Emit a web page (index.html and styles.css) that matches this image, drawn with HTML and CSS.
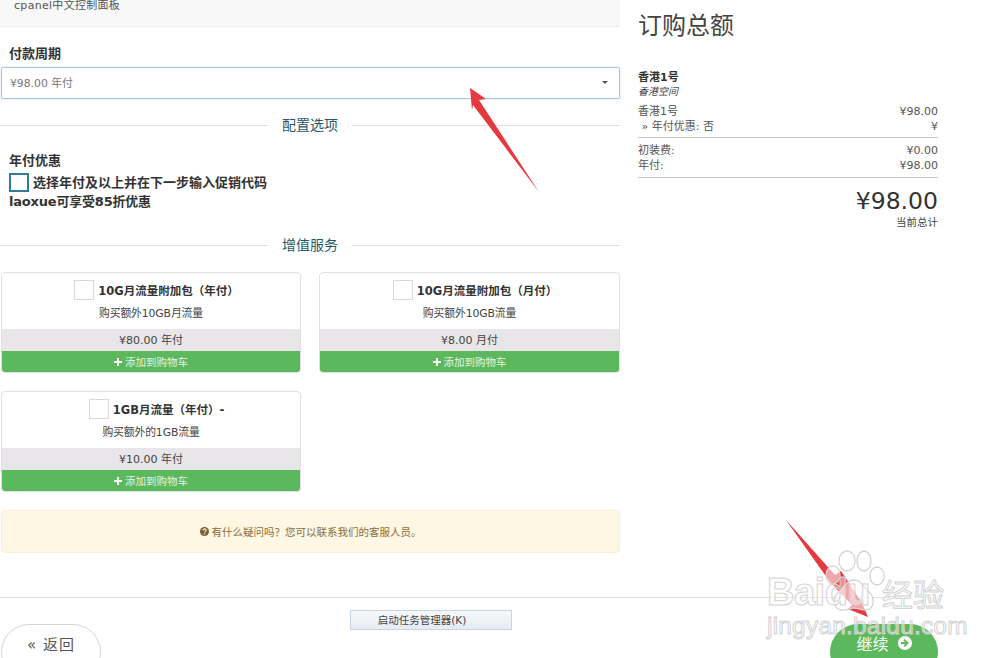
FILE: index.html
```html
<!DOCTYPE html>
<html lang="zh">
<head>
<meta charset="utf-8">
<title>订购</title>
<link rel="stylesheet" href="styles.css">
</head>
<body>
<div class="page">
  <div class="columns">
    <main class="left">
      <div class="product-top">cpanel中文控制面板</div>
      <div class="field-label">付款周期</div>
      <div class="select"><span>¥98.00 年付</span><i class="caret"></i></div>
      <div class="divider first"><span>配置选项</span></div>
      <div class="option">
        <div class="option-title">年付优惠</div>
        <div class="option-line"><i class="check active"></i><span>选择年付及以上并在下一步输入促销代码</span></div>
        <div class="option-last">laoxue可享受85折优惠</div>
      </div>
      <div class="divider second"><span>增值服务</span></div>
      <div class="addons">
        <div class="addon">
          <div class="addon-head"><i class="check"></i><b>10G月流量附加包（年付）</b></div>
          <div class="addon-desc">购买额外10GB月流量</div>
          <div class="addon-price">¥80.00 年付</div>
          <div class="addon-add"><svg class="plus" viewBox="0 0 10 10"><path d="M3.8 0h2.4v3.8H10v2.4H6.2V10H3.8V6.2H0V3.8h3.8z"/></svg>添加到购物车</div>
        </div>
        <div class="addon">
          <div class="addon-head"><i class="check"></i><b>10G月流量附加包（月付）</b></div>
          <div class="addon-desc">购买额外10GB流量</div>
          <div class="addon-price">¥8.00 月付</div>
          <div class="addon-add"><svg class="plus" viewBox="0 0 10 10"><path d="M3.8 0h2.4v3.8H10v2.4H6.2V10H3.8V6.2H0V3.8h3.8z"/></svg>添加到购物车</div>
        </div>
        <div class="addon">
          <div class="addon-head"><i class="check"></i><b>1GB月流量（年付）-</b></div>
          <div class="addon-desc">购买额外的1GB流量</div>
          <div class="addon-price">¥10.00 年付</div>
          <div class="addon-add"><svg class="plus" viewBox="0 0 10 10"><path d="M3.8 0h2.4v3.8H10v2.4H6.2V10H3.8V6.2H0V3.8h3.8z"/></svg>添加到购物车</div>
        </div>
      </div>
      <div class="alert"><svg class="help" viewBox="0 0 10 10"><circle cx="5" cy="5" r="5"/><path d="M3.3 3.9c0-1.1.8-1.8 1.8-1.8s1.7.6 1.7 1.5c0 1.3-1.3 1.3-1.3 2.4" fill="none" stroke="#fdf7e3" stroke-width="1.2"/><rect x="4.4" y="7" width="1.3" height="1.3" fill="#fdf7e3"/></svg>有什么疑问吗？您可以联系我们的客服人员。</div>
    </main>
    <aside class="summary">
      <h2>订购总额</h2>
      <div class="sum-name">香港1号</div>
      <div class="sum-group">香港空间</div>
      <div class="sum-row"><span>香港1号</span><span>¥98.00</span></div>
      <div class="sum-row"><span>&nbsp;» 年付优惠: 否</span><span>¥</span></div>
      <div class="sum-rule tight"></div>
      <div class="sum-row"><span>初装费:</span><span>¥0.00</span></div>
      <div class="sum-row"><span>年付:</span><span>¥98.00</span></div>
      <div class="sum-rule"></div>
      <div class="sum-total">¥98.00</div>
      <div class="sum-note">当前总计</div>
    </aside>
  </div>
  <footer class="footer">
    <div class="footer-rule"></div>
    <div class="footer-row">
      <div class="btn back">« 返回</div>
      <div class="btn next">继续<svg class="go" viewBox="0 0 14 14"><circle cx="7" cy="7" r="7" fill="#fff"/><path d="M3 6h4.200L5.400 4.200l1.300-1.300L10.900 7l-4.200 4.100-1.300-1.300L7.200 8H3z" fill="#5cb85c"/></svg></div>
    </div>
  </footer>
  <div class="task-btn">启动任务管理器(K)</div>
  <svg class="arrows" viewBox="0 0 1000 658">
    <path d="M470 88 L486 99 L479 100 L539 192 L473 105 L472 110 Z" fill="#e5393f"/>
    <path d="M786 520 L835 575 L841 571 L862 603 L868 617 L848 609 L852 605 L830 582 Z" fill="#e5393f"/>
  </svg>
  <div class="watermark">
    <svg class="paw" viewBox="0 0 60 66">
      <g fill="rgba(255,255,255,.55)" stroke="#d4d4d4" stroke-width="1.300">
        <ellipse cx="8" cy="25" rx="7" ry="9"/>
        <ellipse cx="22" cy="11" rx="8" ry="10"/>
        <ellipse cx="39" cy="11" rx="7" ry="10"/>
        <ellipse cx="52" cy="26" rx="7" ry="9"/>
        <path d="M29 30c8 0 10 8 15 12 6 5 6 17-3 18-5 .600-8-2-12-2s-8 3-13 2c-9-2-8-14-2-18 5-4 7-12 15-12z"/>
      </g>
    </svg>
    <span class="wm-baidu">Baidu</span>
    <span class="wm-cn">经验</span>
    <span class="wm-url">jingyan.baidu.com</span>
  </div>
</div>
</body>
</html>
```
FILE: styles.css
```css
* { box-sizing: border-box; }
html, body { margin: 0; padding: 0; background: #fff; }
body { font-family: "DejaVu Sans", "Noto Sans CJK SC", sans-serif; font-size: 11px; color: #444; }
.page { position: relative; width: 1000px; height: 658px; overflow: hidden; }
.columns { display: flex; height: 597px; }
.left { width: 620px; flex: none; }
.product-top { height: 27px; background: #f8f8f9; border-bottom: 1px solid #eeeeee; padding-left: 14px; font-size: 11px; line-height: 11px; color: #555; letter-spacing: .3px; }
.field-label { margin: 18px 0 0 9px; font-size: 13px; line-height: 18px; font-weight: 700; color: #333; }
.select { display: flex; justify-content: space-between; align-items: center; height: 32px; margin: 4px 0 0 1px; padding: 0 11px 2px 8px; border: 1px solid #a8c5de; border-radius: 2px; box-shadow: 0 0 2px #c8dbe9; font-size: 10.800px; color: #777; }
.caret { width: 0; height: 0; border: 3.500px solid transparent; border-top-color: #555; border-bottom: 0; }
.divider { display: flex; align-items: center; gap: 14px; font-size: 14px; line-height: 20px; color: #1f5a6b; }
.divider::before, .divider::after { content: ""; flex: 1; height: 1px; background: #dfdfdf; }
.divider.first { margin-top: 16px; }
.divider.second { margin-top: 25px; }
.option { margin: 18px 0 0 9px; font-size: 13px; font-weight: 700; color: #333; line-height: 17px; }
.option-title { height: 16px; line-height: 16px; }
.option-line { display: flex; align-items: center; gap: 4px; height: 20px; margin-top: 3px; }
.option-last { margin-top: 1px; letter-spacing: -.2px; }
.check { display: block; flex: none; width: 20px; height: 20px; background: #fff; border: 1px solid #d9d9d9; }
.check.active { border: 2px solid #337d96; width: 20px; height: 19px; }
.addons { display: grid; grid-template-columns: 300px 301px; column-gap: 18px; row-gap: 18px; margin: 17px 0 0 1px; }
.addon { height: 101px; border: 1px solid #e0e0e0; border-radius: 4px; overflow: hidden; display: flex; flex-direction: column; text-align: center; color: #444; }
.addon-head { display: flex; flex: none; justify-content: center; align-items: center; gap: 4px; height: 28px; margin-top: 3px; padding-left: 11px; color: #333; font-size: 11.500px; }
.addon-desc { height: 17px; line-height: 17px; margin-top: 1px; flex: none; font-size: 10.800px; letter-spacing: -.1px; }
.addon-price { flex: none; height: 22px; line-height: 22px; padding-top: 1px; margin-top: 7px; background: #e8e6e8; font-size: 11px; }
.addon-add { flex: 1; display: flex; justify-content: center; align-items: center; background: #5cb85c; color: #e4f3e4; font-size: 10.500px; }
.plus { width: 8px; height: 8px; margin-right: 3px; fill: #fff; }
.alert { display: flex; justify-content: center; align-items: center; height: 43px; margin: 18px 0 0 1px; background: #fdf7e3; border: 1px solid #faf0d5; border-radius: 4px; color: #8a6d3b; font-size: 10.500px; }
.help { width: 9px; height: 9px; margin-right: 3px; fill: #7a5f32; }
.summary { width: 300px; flex: none; margin-left: 18px; font-size: 11px; color: #555; }
.summary h2 { margin: 12px 0 0; font-size: 24px; line-height: 28px; font-weight: 400; color: #444; }
.sum-name { margin: 31px 0 0 0; line-height: 14px; font-weight: 700; color: #333; }
.sum-group { line-height: 14px; font-style: italic; font-size: 10px; color: #444; }
.sum-row { display: flex; justify-content: space-between; line-height: 15px; font-size: 11px; }
.sum-group + .sum-row { margin-top: 5px; }
.sum-rule { height: 1px; background: #c8c8c8; margin: 4px 0 5px; }
.sum-rule.tight { margin-top: 3px; }
.sum-total { margin-top: 6px; text-align: right; font-size: 23.500px; line-height: 34px; color: #333; }
.sum-note { text-align: right; font-size: 10.500px; line-height: 15px; margin-top: -3px; color: #444; }
.footer-rule { height: 1px; margin-right: 115px; background: #e2e2e2; }
.footer-row { display: flex; justify-content: space-between; align-items: flex-start; padding: 26px 62px 0 1px; }
.btn { display: flex; justify-content: center; align-items: center; height: 56px; border-radius: 28px; font-size: 15px; padding-bottom: 18px; }
.back { width: 100px; border: 1px solid #d5d5d5; color: #555; background: #fff; letter-spacing: 1px; }
.next { width: 108px; background: #5cb85c; color: #fff; gap: 9px; font-size: 16px; padding-bottom: 18px; }
.go { width: 14px; height: 14px; }
.task-btn { position: absolute; left: 350px; top: 610px; width: 162px; height: 20px; padding-right: 18px; text-align: center; line-height: 18px; font-size: 10.500px; color: #444; background: linear-gradient(#f6f8fb, #e6ecf5); border: 1px solid #c8d5e5; }
.arrows { position: absolute; inset: 0; width: 1000px; height: 658px; pointer-events: none; }
.watermark { position: absolute; inset: 0; pointer-events: none; }
.watermark span { position: absolute; color: rgba(255,255,255,.45); -webkit-text-stroke: 1px #d2d2d2; font-family: "Liberation Sans", sans-serif; white-space: nowrap; }
.paw { position: absolute; left: 825px; top: 550px; width: 60px; height: 66px; }
.wm-baidu { left: 767px; top: 570px; font-size: 38px; line-height: 44px; font-weight: 700; letter-spacing: -.5px; }
.wm-cn { left: 882px; top: 573px; font-size: 31px; line-height: 40px; font-family: "Noto Sans CJK SC", sans-serif !important; }
.wm-url { left: 767px; top: 612px; font-size: 24.500px; line-height: 28px; letter-spacing: .2px; }
```
